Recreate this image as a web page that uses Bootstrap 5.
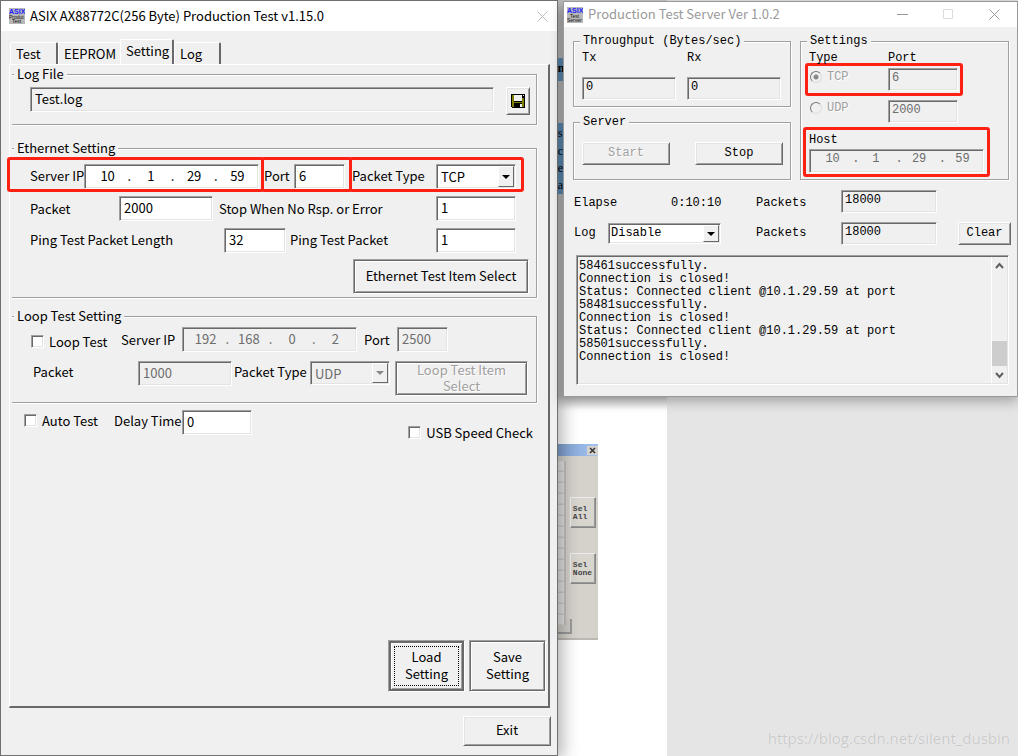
<!DOCTYPE html>
<html lang="en">
<head>
<meta charset="utf-8">
<meta name="viewport" content="width=device-width, initial-scale=1">
<title>Production Test</title>
<link href="https://cdn.jsdelivr.net/npm/bootstrap@5.3.0/dist/css/bootstrap.min.css" rel="stylesheet">
<style>
:root { --face: #f0f0f0; --mid: #a0a0a0; --dark: #696969; --soft: #e3e3e3; --mark: #ff2014; }
body { background: #e5e5e5; color: #000; font: 13px/17px "Noto Sans CJK SC", "Noto Sans", sans-serif; }
input, select, textarea, button { font: inherit; color: inherit; }

/* desktop */
.desktop { min-height: 100vh; grid-template-columns: 558fr 5fr 455fr; }
.paper { left: 0; top: 0; bottom: 0; width: 65.5%; background: linear-gradient(#c9c9c9 0 396px, #fff 410px); }
.win { background: var(--face); border: 1px solid #707070; z-index: 1; }
.win-main { box-shadow: 4px 4px 16px rgba(0,0,0,.32); min-height: 100vh; }
.win-server { border-color: #999; margin-top: 1px; box-shadow: 0 4px 12px rgba(0,0,0,.3); font: 12px/13px "Liberation Mono", monospace; }
.titlebar { background: #fff; }
.titlebar span { padding: 0 0 2px 5px; }
.win-main .titlebar { height: 30px; padding: 0 9px 0 8px; }
.win-server .titlebar { height: 25px; padding: 0 17px 0 3px; color: #999; font: 13px/17px "Noto Sans CJK SC", "Noto Sans", sans-serif; }
.wintool { border: 0; background: none; padding: 0; display: flex; }

/* etched, sunken and raised edges */
.frame { border: 1px solid var(--mid); box-shadow: 1px 1px 0 #fff, inset 0 1px 0 #fff; min-width: 0; }
.frame > legend { background: var(--face); font-size: inherit; line-height: 17px; height: 17px; padding: 0 3px; margin: 0 0 0 2px; }
.frame-open { border-left: 0; }
.frame-open > legend { line-height: 15px; }
.win-server .frame { box-shadow: 1px 1px 0 #fff, inset 1px 1px 0 #fff; }
.win-server .frame > legend { margin-left: 6px; }
.sunken { border: 1px solid; border-color: var(--mid) #fff #fff var(--mid); box-shadow: inset 1px 1px 0 var(--dark), inset -1px -1px 0 var(--soft); background: #fff; border-radius: 0; min-width: 0; }
.sunken:disabled, .sunken.off { background: var(--face); color: #6d6d6d; }
.sunken[readonly] { background: var(--face); }
.field { height: 25px; padding: 0 4px 3px; }
.win-server .field { height: 23px; padding: 0 3px 3px; }
.push { border: 1px solid; border-color: #fff var(--dark) var(--dark) #fff; box-shadow: inset 1px 1px 0 var(--soft), inset -1px -1px 0 var(--mid); background: var(--face); padding: 0; }
.push-framed { border-color: var(--mid) #fff #fff var(--mid); box-shadow: inset 0 0 0 1px var(--dark), inset 2px 2px 0 #fff, inset -2px -2px 0 var(--mid); padding-bottom: 2px; }
.push-default { box-shadow: inset 0 0 0 2px var(--dark), inset 3px 3px 0 #fff, inset -3px -3px 0 var(--mid); position: relative; }
.push-default::after { content: ""; position: absolute; inset: 5px; border: 1px dotted #000; }
.push:disabled { color: var(--mid); text-shadow: 1px 1px 0 #fff; }
.push-server { height: 23px; width: 88px; }

.ip { height: 25px; padding: 0 1px 2px 3px; }
.ip input { border: 0; padding: 0; background: none; min-width: 0; width: 0; flex: 1; text-align: center; color: inherit; }
.ip span { width: 4px; text-align: center; }
.combo { position: relative; height: 25px; }
.combo select { appearance: none; width: 100%; height: 100%; padding: 0 18px 0 4px; opacity: 1; }
.combo::before { content: ""; position: absolute; right: 2px; top: 2px; bottom: 2px; width: 16px; background: var(--face); border: 1px solid; border-color: #fff var(--dark) var(--dark) #fff; pointer-events: none; }
.combo::after { content: ""; position: absolute; right: 6px; top: calc(50% - 2px); border: 4px solid transparent; border-top-color: #000; border-bottom: 0; pointer-events: none; }
.combo.off::after { border-top-color: #888; }
.tick { appearance: none; width: 13px; height: 13px; margin: 0; flex: none; }
.dot { appearance: none; width: 12px; height: 12px; margin: 0; border: 1px solid; border-color: #777 #ddd #ddd #777; border-radius: 50%; flex: none; }
.dot:checked { background: radial-gradient(#888 0 2px, transparent 3px); }
.callout { border: 3px solid var(--mark); border-radius: 3px; }

/* tabs */
.tabs { height: 24px; padding-left: 1px; }
.tabs .nav-link { color: #000; padding: 2px 0 0 5px; height: 22px; border: 0; border-top: 1px solid #fff; border-left: 1px solid #fff; border-right: 2px solid var(--dark); border-radius: 2px 2px 0 0; }
.tabs .nav-link.active { height: 25px; background: var(--face); position: relative; }
.tabpage { border: 1px solid #fff; border-right: 2px solid var(--dark); border-bottom: 2px solid var(--dark); padding: 1px 11px 14px 2px; }

/* rows of the settings page */
.rowgrid { display: grid; align-items: center; }
.g-packet { grid-template-columns: 89px 94px 6px 217px minmax(0, 1fr); margin: 4px 20px 0 18px; }
.g-ping { grid-template-columns: 194px 62px 4px 146px minmax(0, 1fr); margin: 7px 20px 0 18px; }
.g-ping label { padding-bottom: 3px; }
.g-loop { grid-template-columns: 90px 61px 175px 7px 33px 51px; padding-left: 19px; }
.g-loop2 { grid-template-columns: 105px 94px 2px 76px 80px 5px minmax(0, 1fr); padding: 0 8px 6px 21px; }
.g-auto { grid-template-columns: 90px 68px 70px; padding-left: 12px; }
.callout > label[for] { padding-bottom: 3px; }

/* server window */
.server-top { grid-template-columns: minmax(0, 219fr) minmax(0, 210fr); gap: 9px; padding: 6px 8px 0 9px; }
.g-stat { grid-template-columns: 34px 113px 35px 85px 96px minmax(0, 1fr); }
.logtext { border: 0; background: none; resize: none; overflow: hidden; height: 126px; padding: 3px 1px; }
.scroller { width: 16px; border-left: 1px solid #fff; }
.thumb { height: 25px; background: #cdcdcd; width: 15px; }

/* content behind the windows */
.sliver { left: 54.8%; top: 0; width: 8px; height: 396px; overflow: hidden; font: 12px/20px "Liberation Serif", serif; }
.sliver b, .sliver span { display: block; background: #6699c4; }
.olddlg { left: 54.7%; top: 444px; width: 41px; height: 196px; background: #d5d2cc; border-bottom: 2px solid #bbb8b3; font: bold 8px/8px "Liberation Mono", monospace; color: #444; }
.oldbar { height: 12px; background: linear-gradient(90deg, #7f9fd0, #a3c3f0); }
.oldx { width: 11px; height: 9px; }
.oldlist { width: 9px; height: 164px; margin-top: 5px; border-right: 2px solid #c3c0ba; background: repeating-linear-gradient(#e2e2e2 0 9px, #ccc 10px 11px); }
.oldbtn { width: 26px; height: 31px; border: 1px solid; border-color: #eee #888 #888 #eee; font: inherit; padding: 0 0 0 2px; background: #d8d5cf; text-align: left; color: inherit; overflow: hidden; box-shadow: inset -1px -1px #999; }
.oldfoot { width: 15px; height: 15px; border-right: 2px solid #999; border-bottom: 2px solid #999; background: #d0cdc7; margin-top: -6px; }
.watermark { right: 8px; bottom: 8px; color: #c9c9c9; font: 15px/20px "Open Sans", sans-serif; text-shadow: 0 0 1px #fff; z-index: 2; }
</style>
</head>
<body>
<main class="desktop position-relative d-grid align-items-start overflow-hidden">
  <div class="paper position-absolute"></div>
  <div class="sliver position-absolute">
    <div style="height:58px"></div><b style="height:23px">n</b>
    <div style="height:42px"></div><span style="height:18px">s</span><span style="height:17px">c</span><span style="height:17px">e</span><span style="height:19px">a</span>
  </div>
  <div class="olddlg position-absolute">
    <div class="oldbar d-flex justify-content-end align-items-center">
      <svg class="oldx" viewBox="0 0 11 9"><path fill="#d5d2cc" d="M0 0h11v9H0z"/><path d="M3 2l5 5M8 2L3 7" stroke="#333" stroke-width="1.5"/></svg>
    </div>
    <div class="d-flex justify-content-between">
      <div class="oldlist"></div>
      <div class="d-flex flex-column" style="padding:41px 2px 0 0;gap:25px">
        <button class="oldbtn" type="button">Sel<br>All</button>
        <button class="oldbtn" type="button">Sel<br>None</button>
      </div>
    </div>
    <div class="oldfoot"></div>
  </div>

  <section class="win win-main d-flex flex-column">
    <header class="titlebar d-flex align-items-center">
      <svg width="16" height="16" viewBox="0 0 16 16"><path fill="#b8b8b8" d="M0 0h16v16H0z"/><text x="0" y="6" font-size="7" font-weight="bold" fill="#22f" font-family="Liberation Sans">ASIX</text><text x="0" y="11" font-size="5" fill="#111" font-family="Liberation Sans">Produt</text><text x="3" y="15" font-size="5" fill="#111" font-family="Liberation Sans">Test</text></svg>
      <span class="flex-grow-1">ASIX AX88772C(256 Byte) Production Test v1.15.0</span>
      <button class="wintool" type="button" aria-label="Close"><svg width="11" height="11" viewBox="0 0 11 11"><path d="M.5.5l10 10M10.5.5l-10 10" stroke="#bbb"/></svg></button>
    </header>
    <div class="flex-grow-1 d-flex flex-column" style="padding:9px 7px 9px 8px">
      <ul class="nav tabs flex-nowrap align-items-end">
        <li><a class="nav-link" href="#" style="width:48px">Test</a></li>
        <li><a class="nav-link" href="#" style="width:62px;border-right:0">EEPROM</a></li>
        <li><a class="nav-link active" href="#" style="width:54px">Setting</a></li>
        <li><a class="nav-link" href="#" style="width:47px">Log</a></li>
      </ul>
      <div class="tabpage flex-grow-1 d-flex flex-column">
        <fieldset class="frame frame-open">
          <legend class="float-none w-auto">Log File</legend>
          <div class="d-flex align-items-start" style="padding:4px 6px 9px 18px;gap:12px">
            <input class="sunken field flex-grow-1" aria-label="Log file" value="Test.log" readonly>
            <button class="push d-flex align-items-center justify-content-center" type="button" aria-label="Save log" style="width:24px;height:28px">
              <svg width="14" height="14" viewBox="0 0 14 14" shape-rendering="crispEdges"><path d="M0 0h14v14H1L0 13z"/><path fill="#808000" d="M1 1h2v7h8V4h2v9h-2V9H3v4H1z"/><path fill="#f0f0f0" d="M3 1h8v6H3zM12 1h1v1h-1zM9 10h2v3H9z"/></svg>
            </button>
          </div>
        </fieldset>

        <fieldset class="frame frame-open" style="margin-top:15px">
          <legend class="float-none w-auto">Ethernet Setting</legend>
          <div class="d-flex align-items-center" style="margin:0 12px 0 -5px">
            <div class="callout d-flex align-items-center text-nowrap" style="padding:4px 2px 0 20px;width:257px">
              <label for="ip1" style="width:54px">Server IP</label>
              <div class="ip sunken d-flex align-items-center flex-grow-1"><input id="ip1" value="10"><span>.</span><input aria-label="Octet 2" value="1"><span>.</span><input aria-label="Octet 3" value="29"><span>.</span><input aria-label="Octet 4" value="59"></div>
            </div>
            <div class="callout d-flex align-items-center" style="padding:4px 4px 0 0;width:91px;margin-left:-3px">
              <label for="port1" style="width:30px">Port</label>
              <input id="port1" class="sunken field flex-grow-1" style="width:0" value="6">
            </div>
            <div class="callout d-flex align-items-center flex-grow-1 text-nowrap" style="padding:4px 5px 0 0;margin-left:-3px">
              <label for="type1" style="width:84px">Packet Type</label>
              <div class="combo flex-grow-1"><select id="type1" class="sunken"><option>TCP</option><option>UDP</option></select></div>
            </div>
          </div>
          <div class="rowgrid g-packet">
            <label for="pk1">Packet</label><input id="pk1" class="sunken field" value="2000"><i></i>
            <label for="stop1">Stop When No Rsp. or Error</label><input id="stop1" class="sunken field" value="1">
          </div>
          <div class="rowgrid g-ping">
            <label for="pl1">Ping Test Packet Length</label><input id="pl1" class="sunken field" value="32"><i></i>
            <label for="pp1">Ping Test Packet</label><input id="pp1" class="sunken field" value="1">
          </div>
          <div class="d-flex justify-content-end" style="padding:6px 7px 3px 0">
            <button class="push push-framed" type="button" style="width:176px;height:35px">Ethernet Test Item Select</button>
          </div>
        </fieldset>

        <fieldset class="frame frame-open" style="margin-top:10px">
          <legend class="float-none w-auto">Loop Test Setting</legend>
          <div class="rowgrid g-loop" style="padding-top:2px">
            <label class="d-flex align-items-center pt-1" style="gap:5px"><input type="checkbox" class="sunken tick">Loop Test</label>
            <label for="ip2" class="text-nowrap">Server IP</label>
            <div class="ip sunken off d-flex align-items-center"><input id="ip2" value="192" disabled><span>.</span><input aria-label="Octet 2" value="168" disabled><span>.</span><input aria-label="Octet 3" value="0" disabled><span>.</span><input aria-label="Octet 4" value="2" disabled></div><i></i>
            <label for="port2">Port</label><input id="port2" class="sunken field" value="2500" disabled>
          </div>
          <div class="rowgrid g-loop2 align-items-start" style="margin-top:9px">
            <label for="pk2" style="padding-top:2px">Packet</label><input id="pk2" class="sunken field" value="1000" disabled><i></i>
            <label for="type2" class="text-nowrap" style="padding-top:2px">Packet Type</label>
            <div class="combo off" style="height:24px"><select id="type2" class="sunken" disabled><option>UDP</option></select></div><i></i>
            <button class="push push-framed" type="button" style="height:35px;line-height:16px" disabled>Loop Test Item<br>Select</button>
          </div>
        </fieldset>

        <div class="d-flex justify-content-between align-items-start" style="margin-top:7px">
          <div class="rowgrid g-auto">
            <label class="d-flex align-items-center" style="gap:5px;padding-bottom:5px"><input type="checkbox" class="sunken tick">Auto Test</label>
            <label for="delay" class="text-nowrap" style="padding-bottom:5px">Delay Time</label><input id="delay" class="sunken field" value="0">
          </div>
          <label class="d-flex align-items-center" style="gap:5px;padding:14px 4px 0 0"><input type="checkbox" class="sunken tick">USB Speed Check</label>
        </div>

        <div class="d-flex justify-content-end mt-auto" style="gap:4px;margin-right:-9px">
          <button class="push push-framed push-default" type="button" style="width:77px;height:52px">Load<br>Setting</button>
          <button class="push push-framed" type="button" style="width:77px;height:52px">Save<br>Setting</button>
        </div>
      </div>
      <div class="d-flex justify-content-end" style="padding-top:8px;margin-right:-1px">
        <button class="push pb-1" type="button" style="width:88px;height:30px">Exit</button>
      </div>
    </div>
  </section>

  <i></i>

  <section class="win win-server">
    <header class="titlebar d-flex align-items-center">
      <svg width="16" height="16" viewBox="0 0 16 16"><path fill="#b8b8b8" d="M0 0h16v16H0z"/><text x="0" y="6" font-size="7" font-weight="bold" fill="#22f" font-family="Liberation Sans">ASIX</text><text x="3" y="11" font-size="5" fill="#111" font-family="Liberation Sans">Test</text><text x="0" y="15" font-size="5" fill="#111" font-family="Liberation Sans">Server</text></svg>
      <span class="flex-grow-1">Production Test Server Ver 1.0.2</span>
      <div class="d-flex" style="gap:35px">
        <button class="wintool" type="button" aria-label="Minimize"><svg width="11" height="11"><path d="M0 5.500h11" stroke="#999"/></svg></button>
        <button class="wintool" type="button" aria-label="Maximize"><svg width="11" height="11"><path d="M.5.5h9v9h-9z" fill="none" stroke="#ddd"/></svg></button>
        <button class="wintool" type="button" aria-label="Close"><svg width="11" height="11"><path d="M.5.5l10 10M10.500.5l-10 10" stroke="#999"/></svg></button>
      </div>
    </header>
    <div class="server-top d-grid">
      <div class="d-flex flex-column">
        <fieldset class="frame">
          <legend class="float-none w-auto">Throughput (Bytes/sec)</legend>
          <div class="d-flex" style="padding:2px 9px 6px 8px;gap:11px">
            <div class="d-flex flex-column flex-fill" style="gap:12px;width:0"><label for="tx">Tx</label><input id="tx" class="sunken field" value="0" readonly></div>
            <div class="d-flex flex-column flex-fill" style="gap:12px;width:0"><label for="rx">Rx</label><input id="rx" class="sunken field" value="0" readonly></div>
          </div>
        </fieldset>
        <fieldset class="frame flex-grow-1" style="margin-top:7px">
          <legend class="float-none w-auto">Server</legend>
          <div class="d-flex justify-content-between" style="padding:11px 7px 0 8px">
            <button class="push push-server" type="button" disabled>Start</button>
            <button class="push push-server" type="button">Stop</button>
          </div>
        </fieldset>
      </div>
      <fieldset class="frame">
        <legend class="float-none w-auto">Settings</legend>
        <div class="d-flex" style="padding:2px 0 0 8px;height:14px"><span style="width:79px">Type</span><span>Port</span></div>
        <div class="callout d-flex" style="margin:-1px 45px 0 4px;padding:2px">
          <label class="d-flex align-items-center" style="gap:5px;width:78px;padding-bottom:5px;color:#a0a0a0;text-shadow:1px 1px #fff"><input class="dot" type="radio" name="proto" checked disabled>TCP</label>
          <input class="sunken field flex-grow-1" aria-label="TCP port" style="width:0" value="6" disabled>
        </div>
        <div class="d-flex" style="padding:4px 50px 4px 9px">
          <label class="d-flex align-items-center" style="gap:5px;width:78px;padding-bottom:7px;color:#a0a0a0;text-shadow:1px 1px #fff"><input class="dot" type="radio" name="proto" disabled>UDP</label>
          <input class="sunken field flex-grow-1" aria-label="UDP port" style="width:0" value="2000" disabled>
        </div>
        <div class="callout" style="margin:0 18px 2px 2px;padding:4px 3px 1px">
          <label for="host" class="d-block" style="margin-bottom:2px;padding:0">Host</label>
          <div class="ip sunken off d-flex align-items-center" style="height:24px;padding-bottom:4px"><input id="host" value="10" disabled><span>.</span><input aria-label="Octet 2" value="1" disabled><span>.</span><input aria-label="Octet 3" value="29" disabled><span>.</span><input aria-label="Octet 4" value="59" disabled></div>
        </div>
      </fieldset>
    </div>
    <div class="d-flex flex-column" style="padding:10px 6px 0 10px;gap:9px">
      <div class="rowgrid g-stat">
        <span class="text-nowrap pt-1">Elapse</span><span class="pt-1" style="padding-left:63px">0:10:10</span><i></i>
        <label for="p1" class="pt-1">Packets</label><input id="p1" class="sunken field" value="18000" readonly>
      </div>
      <div class="rowgrid g-stat">
        <label for="lg">Log</label><div class="combo" style="height:21px"><select id="lg" class="sunken" style="padding-left:2px"><option>Disable</option></select></div><i></i>
        <label for="p2">Packets</label><input id="p2" class="sunken field" value="18000" readonly>
        <button class="push ms-auto" type="button" style="width:53px;height:23px">Clear</button>
      </div>
    </div>
    <div class="sunken off d-flex" style="margin:10px 8px 11px 12px;padding:1px">
      <textarea class="logtext flex-grow-1 text-black" aria-label="Log output" readonly>58461successfully.
Connection is closed!
Status: Connected client @10.1.29.59 at port
58481successfully.
Connection is closed!
Status: Connected client @10.1.29.59 at port
58501successfully.
Connection is closed!</textarea>
      <div class="scroller d-flex flex-column justify-content-between">
        <svg width="15" height="17"><path d="M4 11l3.500-4 3.500 4" fill="none" stroke="#606060" stroke-width="2"/></svg>
        <div class="mt-auto thumb"></div>
        <svg width="15" height="17"><path d="M4 7l3.500 4 3.500-4" fill="none" stroke="#606060" stroke-width="2"/></svg>
      </div>
    </div>
  </section>

  <div class="watermark position-absolute">https://blog.csdn.net/silent_dusbin</div>
</main>
<script src="https://cdn.jsdelivr.net/npm/bootstrap@5.3.0/dist/js/bootstrap.bundle.min.js"></script>
</body>
</html>
